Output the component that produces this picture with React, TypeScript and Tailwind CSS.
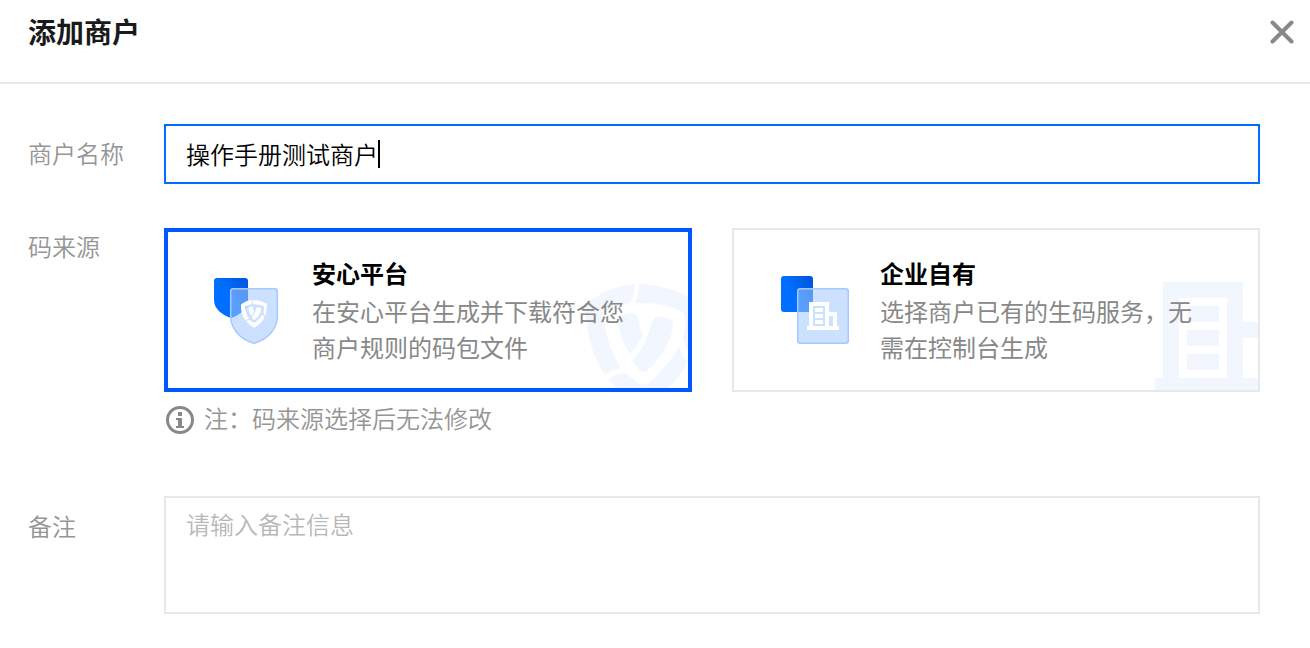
import { useState } from "react";

type CodeSource = "platform" | "own";

const SOURCES: { value: CodeSource; title: string; description: string }[] = [
  {
    value: "platform",
    title: "安心平台",
    description: "在安心平台生成并下载符合您商户规则的码包文件",
  },
  {
    value: "own",
    title: "企业自有",
    description: "选择商户已有的生码服务，无需在控制台生成",
  },
];

export default function App() {
  const [name, setName] = useState("操作手册测试商户");
  const [source, setSource] = useState<CodeSource>("platform");
  const [remark, setRemark] = useState("");

  return (
    <div className="min-h-screen bg-white font-['Noto_Sans_CJK_SC',sans-serif] text-2xl font-[350] text-[#959595]">
      <header className="flex min-h-21 items-start justify-between border-b-2 border-[#e5e9ee] pr-4 pl-7">
        <h1 className="pt-2.5 text-[28px] leading-[42px] font-bold text-[#1a1a1a]">
          添加商户
        </h1>
        <button type="button" aria-label="关闭" className="mt-5">
          <CloseIcon />
        </button>
      </header>

      <form className="pt-10 pr-[50px] pl-7">
        {/* 商户名称 */}
        <div className="flex">
          <label htmlFor="name" className="w-[136px] shrink-0 leading-[58px]">
            商户名称
          </label>
          <div className="flex h-[60px] min-w-0 flex-1 items-center border-2 border-[#006eff] px-5">
            <input
              id="name"
              value={name}
              onChange={(event) => setName(event.target.value)}
              className="max-w-full leading-9 text-black caret-transparent outline-none [field-sizing:content]"
            />
            <span className="h-7 w-0.5 shrink-0 bg-black" />
          </div>
        </div>

        {/* 码来源 */}
        <fieldset className="mt-11 flex">
          <legend className="float-left w-[136px] shrink-0 leading-9">码来源</legend>
          <div className="min-w-0 flex-1">
            <div className="grid grid-cols-2 gap-10">
              {SOURCES.map((item) => (
                <SourceCard
                  key={item.value}
                  {...item}
                  checked={source === item.value}
                  onSelect={() => setSource(item.value)}
                />
              ))}
            </div>
            <p className="mt-2 flex items-center gap-2.5 pl-0.5 leading-9">
              <InfoIcon />
              注：码来源选择后无法修改
            </p>
          </div>
        </fieldset>

        {/* 备注 */}
        <div className="mt-15 flex">
          <label htmlFor="remark" className="w-[136px] shrink-0 pt-3 leading-9">
            备注
          </label>
          <textarea
            id="remark"
            rows={3}
            value={remark}
            onChange={(event) => setRemark(event.target.value)}
            placeholder="请输入备注信息"
            className="h-[118px] min-w-0 flex-1 resize-none border-2 border-[#e7e8ec] px-5 py-2 leading-9 text-black outline-none placeholder:text-[#b8b8b8]"
          />
        </div>
      </form>
    </div>
  );
}

function SourceCard({
  value,
  title,
  description,
  checked,
  onSelect,
}: {
  value: CodeSource;
  title: string;
  description: string;
  checked: boolean;
  onSelect: () => void;
}) {
  return (
    <label
      className={`relative flex min-h-[164px] cursor-pointer items-center gap-7 overflow-hidden ${
        checked
          ? "border-4 border-[#0057ff] px-11"
          : "border-2 border-[#e7e8ec] px-[46px]"
      }`}
    >
      <input
        type="radio"
        name="source"
        value={value}
        checked={checked}
        onChange={onSelect}
        className="sr-only"
      />
      {value === "platform" ? <ShieldWatermark /> : <BuildingWatermark />}
      {value === "platform" ? <ShieldIcon /> : <BuildingIcon />}
      <span className="relative min-w-0 flex-1 leading-9">
        <span className="mb-0.5 block font-bold text-black">{title}</span>
        <span className="block font-normal text-[#888]">{description}</span>
      </span>
    </label>
  );
}

function CloseIcon() {
  return (
    <svg width="24" height="24" viewBox="0 0 24 24" fill="none" aria-hidden="true">
      <path
        d="M2.500 2.500l19 19M21.500 2.500l-19 19"
        stroke="#888"
        strokeWidth="4"
        strokeLinecap="round"
      />
    </svg>
  );
}

function InfoIcon() {
  return (
    <svg
      width="28"
      height="28"
      viewBox="0 0 28 28"
      fill="none"
      className="mt-1 shrink-0"
      aria-hidden="true"
    >
      <circle cx="14" cy="14" r="12.5" stroke="#888" strokeWidth="3" />
      <path d="M12 6h4v4h-4zM10 12h6v8h2v2h-8v-2h2v-6h-2z" fill="#888" />
    </svg>
  );
}

// 盾牌由三段外环和两块内芯组成，图标与水印共用
function ShieldMark({ color }: { color: string }) {
  return (
    <g fill={color}>
      <path d="M51 4Q24 6 2 24Q0 62 21 95Q28 89 37 89Q23 66 20 40Q19 34 25 31Q34 25 46 23Q51 15 51 4Z" />
      <path d="M55 4Q88 5 114 22Q114 50 107 76Q101 68 99 58Q102 48 101 38Q101 33 97 31Q80 22 51 23Q55 14 55 4Z" />
      <path d="M24 99Q32 93 41 93L54 103Q61 107 68 100Q84 86 95 67Q98 76 104 82Q88 112 58 127Q38 116 24 99Z" />
      <path d="M34 43Q33 36 41 34Q54 30 55 42Q56 52 59 53Q56 64 46 74Q36 60 34 43Z" />
      <path d="M48 80Q58 72 64 55Q67 41 71 37Q75 35 86 39Q90 41 89 46Q86 68 65 89Q60 94 56 91Z" />
    </g>
  );
}

function ShieldIcon() {
  return (
    <svg width="72" height="72" viewBox="0 0 72 72" fill="none" className="shrink-0" aria-hidden="true">
      <defs>
        <linearGradient id="shield-back" x1="8" y1="32" x2="36" y2="12" gradientUnits="userSpaceOnUse">
          <stop offset=".4" stopColor="#006eff" />
          <stop offset="1" stopColor="#0058e0" />
        </linearGradient>
      </defs>
      <path
        d="M5 4H33Q36 4 36 7V26C36 35 28 41 19 44C10 41 2 35 2 26V7Q2 4 5 4Z"
        fill="url(#shield-back)"
      />
      <path
        d="M21 14.700H63Q65.300 14.700 65.300 17V42C65.300 55 56 65 42 69.300C28 65 18.700 55 18.700 42V17Q18.700 14.700 21 14.700Z"
        fill="#a3c9ff"
        fillOpacity=".55"
        stroke="#a3c9ff"
        strokeWidth="1.500"
      />
      <g transform="translate(28.500 25) scale(.232 .226)">
        <ShieldMark color="#fff" />
      </g>
    </svg>
  );
}

function BuildingIcon() {
  return (
    <svg width="72" height="72" viewBox="0 0 72 72" fill="none" className="shrink-0" aria-hidden="true">
      <defs>
        <linearGradient id="building-back" x1="6" y1="32" x2="34" y2="14" gradientUnits="userSpaceOnUse">
          <stop offset=".4" stopColor="#006eff" />
          <stop offset="1" stopColor="#0058e0" />
        </linearGradient>
      </defs>
      <rect x="1" y="2" width="32" height="36" rx="3" fill="url(#building-back)" />
      <rect
        x="17.700"
        y="14.700"
        width="50.600"
        height="54.600"
        rx="2.500"
        fill="#a3c9ff"
        fillOpacity=".55"
        stroke="#a3c9ff"
        strokeWidth="1.500"
      />
      <path
        d="M29 28H49V38H57V52H59V56H27V52H29ZM33 32V52H45V32ZM49 42V52H53V42Z"
        fill="#fff"
        fillRule="evenodd"
      />
      <path d="M35 34h8v4h-8zM35 40h8v4h-8zM35 46h8v4h-8z" fill="#fff" />
    </svg>
  );
}

function ShieldWatermark() {
  return (
    <svg
      width="104"
      height="108"
      viewBox="0 0 104 108"
      className="absolute right-0 bottom-0"
      aria-hidden="true"
    >
      <ShieldMark color="#f2f7ff" />
    </svg>
  );
}

function BuildingWatermark() {
  return (
    <svg
      width="103"
      height="108"
      viewBox="0 0 103 108"
      className="absolute right-0 bottom-0"
      aria-hidden="true"
    >
      <path
        d="M8 0H88V40H103V56H88V96H103V108H0V96H8ZM24 16V96H72V16Z"
        fill="#f2f7ff"
        fillRule="evenodd"
      />
      <path d="M32 24h32v16H32zM32 48h32v16H32zM32 72h32v16H32z" fill="#f2f7ff" />
    </svg>
  );
}
